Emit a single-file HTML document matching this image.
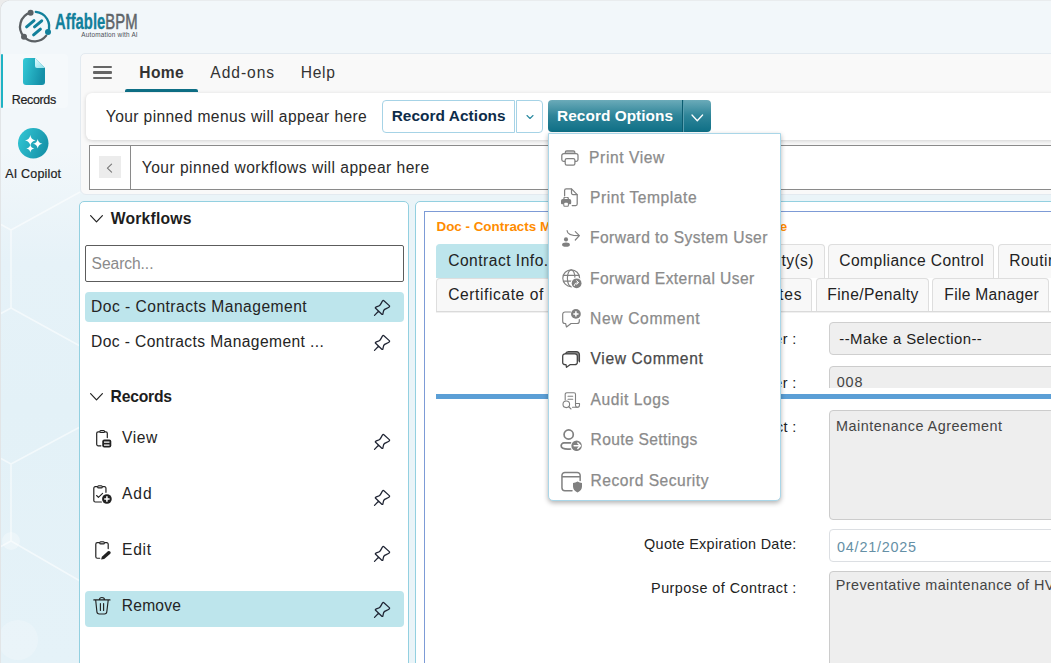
<!DOCTYPE html>
<html lang="en">
<head>
<meta charset="utf-8">
<title>AffableBPM</title>
<style>
*{box-sizing:border-box;margin:0;padding:0}
html,body{width:1051px;height:663px;overflow:hidden}
body{position:relative;font-family:"Liberation Sans",sans-serif;color:#222;background:#f2f7fa;font-size:16px}
.abs{position:absolute}
.t{position:absolute;white-space:nowrap;line-height:1}
#bgl{left:0;top:150px;width:90px;height:513px;background:linear-gradient(180deg,rgba(228,241,247,0) 0%,#e6f2f8 22%,#e3f1f7 50%,#e5f2f8 100%)}
#bgb{left:80px;top:194px;width:971px;height:469px;background:#eaf4f8}
#winedge{left:0;top:0;width:1px;height:663px;background:#e2e5e7}
#wincorner{left:0;top:0;width:9px;height:9px;background:radial-gradient(circle at 100% 100%,rgba(0,0,0,0) 7.600px,#dcdfe1 8.200px,#ececec 9px)}
#wintop{left:0;top:0;width:1051px;height:1px;background:#e9ecee}
#logo{left:17px;top:7px;width:130px;height:40px}
#navact{left:3px;top:54px;width:65px;height:53.500px;background:#f5f9fb;border-radius:0 4px 4px 0}
#navbar{left:1px;top:54px;width:2px;height:53.500px;background:#1fb3c4;border-radius:1px}
#main{left:80px;top:53px;width:980px;height:141.500px;background:#f9f9f9;border:1px solid #e3eaf0;border-radius:5px 0 0 6px}
#hb i{position:absolute;left:0;width:19px;height:2.500px;background:#666;border-radius:1px}
#homeul{left:125px;top:89px;width:73px;height:3px;background:#0e6f86;border-radius:2px 2px 0 0}
#pin1{left:86px;top:92.500px;width:980px;height:47px;background:#fff;border-radius:6px;box-shadow:0 1px 4px rgba(0,0,0,.16)}
#pin2{left:89px;top:145px;width:980px;height:45px;background:#fff;border:1px solid #8a8a8a}
#pin2 .div{position:absolute;left:40px;top:0;width:1px;height:43px;background:#8a8a8a}
#pin2 .bk{position:absolute;left:9px;top:10px;width:22px;height:22px;background:#ececec}
#ra{left:382px;top:100px;width:133px;height:33px;border:1px solid #a6d3e6;border-radius:4px 0 0 4px;background:#fff}
#rad{left:516px;top:100px;width:27px;height:33px;border:1px solid #a6d3e6;border-radius:0 4px 4px 0;background:#fff}
#ro{left:548px;top:100px;width:134px;height:32px;border-radius:4px 0 0 4px;background:linear-gradient(180deg,#6babb9 0%,#2f8599 48%,#0e6f86 100%)}
#rod{left:684px;top:100px;width:27px;height:32px;border-radius:0 4px 4px 0;background:linear-gradient(180deg,#6babb9 0%,#2f8599 48%,#0e6f86 100%)}
#rosep{left:682px;top:100px;width:2px;height:32px;background:linear-gradient(90deg,#0b5c70 0,#0b5c70 50%,#5a9fb0 50%,#5a9fb0 100%)}
#side{left:79px;top:201px;width:330px;height:480px;background:#fff;border:1px solid #93d0e0;border-radius:5px}
#search{left:85px;top:245px;width:319px;height:37px;border:1px solid #5c5c5c;border-radius:2px;background:#fff}
.sel{background:#bde5ec;border-radius:4px}
#cont{left:415px;top:201px;width:700px;height:480px;background:#fff;border:1px solid #93d0e0;border-radius:5px}
#cont2{left:424px;top:211px;width:700px;height:480px;background:#fff;border:1px solid #7d9bd6}
.tab{position:absolute;height:34px;background:#f8f8f8;border:1px solid #dedede;border-bottom:none;border-radius:4px 4px 0 0}
.inp{position:absolute;background:#eee;border:1px solid #ccc;border-radius:4px}
#dd{left:548px;top:133px;width:233px;height:367.500px;background:#fff;border:1px solid #a9d6e8;border-radius:0 0 5px 5px;box-shadow:0 2px 5px rgba(0,0,0,.3)}
svg{position:absolute;overflow:visible}
</style>
</head>
<body>
<div class="abs" id="bgl"></div>
<div class="abs" id="bgb"></div>
<svg style="left:0;top:190px;width:80px;height:473px" viewBox="0 190 80 473"><g fill="none" stroke="#fff" stroke-opacity=".55" stroke-width="1.600"><path d="M0 224 L11 230 L80 192 M11 230 V308 L80 346 M11 308 L0 314"/><path d="M80 427 L11 464 V541 L80 581 M11 541 L0 547 M11 464 L0 458"/></g><circle cx="11" cy="541" r="9" fill="#fff" fill-opacity=".3"/><circle cx="18" cy="640" r="20" fill="#fff" fill-opacity=".2"/></svg>
<div class="abs" id="winedge"></div>
<div class="abs" id="wintop"></div>
<div class="abs" id="wincorner"></div>
<svg id="logo" viewBox="0 0 130 40">
  <g fill="none" stroke-linecap="round">
    <path d="M18.800 4.950 A14.600 14.600 0 0 1 31 25.100" stroke="#12809b" stroke-width="2.300"/>
    <path d="M13.600 5.700 A14.600 14.600 0 0 0 7 29.700" stroke="#5b6064" stroke-width="2.300"/>
    <path d="M7 29.700 A14.600 14.600 0 0 0 29.200 28.600" stroke="#5b6064" stroke-width="2.300"/>
    <path d="M9.600 19.900 L17 13.600 M17.500 19.900 L24.700 13.800 M16.600 27.800 L23.400 22.200" stroke="#12809b" stroke-width="3"/>
  </g>
  <circle cx="13.600" cy="5.700" r="3" fill="#5b6064"/>
  <circle cx="31" cy="25.100" r="3" fill="#12809b"/>
  <circle cx="7" cy="29.700" r="3" fill="#5b6064"/>
</svg>
<div class="t" id="lg1" style="left:54.500px;top:10.68px;font-size:22px;font-weight:bold;color:#12809b;-webkit-text-stroke:0.3px #12809b;transform-origin:0 0;transform:scaleX(0.6749)">Affable<span style="font-weight:normal;color:#5f6569;-webkit-text-stroke:0.55px #5f6569">BPM</span></div>
<div class="t" id="lg2" style="left:81.3px;top:32.30px;font-size:6.4px;color:#4a4f55;letter-spacing:0.200px;">Automation with AI</div>
<div class="abs" id="navact"></div>
<div class="abs" id="navbar"></div>
<svg style="left:23px;top:58px;width:22px;height:27px" viewBox="0 0 22 27">
  <defs><linearGradient id="g1" x1="0" y1="0" x2="1" y2="0.300"><stop offset="0" stop-color="#34cbd8"/><stop offset="1" stop-color="#1590a8"/></linearGradient>
  <linearGradient id="g2" x1="0" y1="0" x2="1" y2="1"><stop offset="0" stop-color="#e4fbff"/><stop offset="1" stop-color="#8fe0ea"/></linearGradient></defs>
  <path d="M3 0 H12 L22 10 V24 a3 3 0 0 1 -3 3 H3 a3 3 0 0 1 -3 -3 V3 a3 3 0 0 1 3 -3z" fill="url(#g1)"/>
  <path d="M12 0 L22 10 H14 a2 2 0 0 1 -2 -2z" fill="url(#g2)"/>
</svg>
<div class="t" id="nv1" style="left:11.8px;top:93.75px;font-size:12.5px;color:#222;letter-spacing:-0.358px;-webkit-text-stroke:0.2px #222;">Records</div>
<svg style="left:18px;top:128px;width:30.500px;height:30.500px" viewBox="0 0 30 30">
  <defs><linearGradient id="g3" x1="0" y1="0" x2="1" y2="0.400"><stop offset="0" stop-color="#33c8d6"/><stop offset="1" stop-color="#1795ab"/></linearGradient></defs>
  <circle cx="15" cy="15" r="15" fill="url(#g3)"/>
  <path d="M12.10 6.98 Q12.78 11.52 17.31 12.20 Q12.78 12.87 12.10 17.41 Q11.42 12.87 6.89 12.20 Q11.42 11.52 12.10 6.98z M19.38 10.82 Q19.98 14.84 24.00 15.44 Q19.98 16.04 19.38 20.07 Q18.78 16.04 14.75 15.44 Q18.78 14.84 19.38 10.82z M12.10 16.13 Q12.61 19.55 16.03 20.07 Q12.61 20.58 12.10 24.00 Q11.59 20.58 8.16 20.07 Q11.59 19.55 12.10 16.13z" fill="#fff"/>
</svg>
<div class="t" id="nv2" style="left:5.3px;top:167.75px;font-size:12.5px;color:#222;letter-spacing:0.167px;-webkit-text-stroke:0.2px #222;">AI Copilot</div>
<div class="abs" id="main"></div>
<div class="abs" id="hb" style="left:93px;top:65.800px;width:19px;height:14px"><i style="top:0"></i><i style="top:5.600px"></i><i style="top:11.100px"></i></div>
<div class="t" id="m1" style="left:139.3px;top:64.70px;font-size:15.6px;font-weight:bold;color:#333;letter-spacing:0.353px;">Home</div>
<div class="t" id="m2" style="left:210.3px;top:64.70px;font-size:15.6px;color:#333;letter-spacing:0.949px;">Add-ons</div>
<div class="t" id="m3" style="left:300.7px;top:64.70px;font-size:15.6px;color:#333;letter-spacing:0.705px;">Help</div>
<div class="abs" id="homeul"></div>
<div class="abs" id="pin1"></div>
<div class="t" id="p1t" style="left:105.8px;top:108.70px;font-size:15.6px;color:#2a2a2a;letter-spacing:0.387px;">Your pinned menus will appear here</div>
<div class="abs" id="pin2"><div class="div"></div><div class="bk"></div>
  <svg style="left:16px;top:16.500px;width:7px;height:10px" viewBox="0 0 7 10"><path d="M5.600 1.200 L1.400 5.200 L5.600 9.200" fill="none" stroke="#777" stroke-width="1.100" stroke-linecap="round" stroke-linejoin="round"/></svg>
</div>
<div class="t" id="p2t" style="left:141.7px;top:159.70px;font-size:15.6px;color:#2a2a2a;letter-spacing:0.476px;">Your pinned workflows will appear here</div>
<div class="abs" id="ra"></div>
<div class="t" id="rat" style="left:391.7px;top:107.80px;font-size:15.4px;font-weight:bold;color:#0d2c4a;letter-spacing:0.059px;">Record Actions</div>
<div class="abs" id="rad"><svg style="left:9px;top:13px;width:8px;height:6px" viewBox="0 0 8 6"><path d="M1 1.500 L4 4.500 L7 1.500" fill="none" stroke="#2a8aa0" stroke-width="1.100" stroke-linecap="round" stroke-linejoin="round"/></svg></div>
<div class="abs" id="ro"></div><div class="abs" id="rosep"></div><div class="abs" id="rod"><svg style="left:6.500px;top:13.500px;width:13px;height:9px" viewBox="0 0 13 9"><path d="M1 1 L6.300 6.700 L11.600 1" fill="none" stroke="#fff" stroke-width="1.300" stroke-linecap="round" stroke-linejoin="round"/></svg></div>
<div class="t" id="rot" style="left:557.1px;top:107.80px;font-size:15.4px;font-weight:bold;color:#fff;letter-spacing:0.038px;">Record Options</div>
<div class="abs" id="side"></div>
<div class="abs" id="cont"></div>
<div class="abs" id="cont2"></div>
<svg style="left:90px;top:214.5px;width:13px;height:8px" viewBox="0 0 13 8"><path d="M0.600 0.700 L6.500 6.800 L12.400 0.700" fill="none" stroke="#222" stroke-width="1.200" stroke-linecap="round" stroke-linejoin="round"/></svg>
<div class="t" id="h1" style="left:110.8px;top:210.65px;font-size:15.7px;font-weight:bold;color:#1d1d1d;letter-spacing:0.201px;">Workflows</div>
<div class="abs" id="search"></div>
<div class="t" id="srch" style="left:91.6px;top:255.70px;font-size:15.6px;color:#8a8a8a;letter-spacing:-0.066px;">Search...</div>
<div class="abs sel" style="left:85px;top:292px;width:319px;height:30px"></div>
<div class="t" id="w1" style="left:91.1px;top:298.70px;font-size:15.6px;color:#242424;letter-spacing:0.474px;">Doc - Contracts Management</div>
<svg style="left:374px;top:300px;width:16px;height:16px" viewBox="0 0 16 16"><path d="M8.600 0.900 Q9.200 0.100 9.900 0.700 L15.300 5.600 Q16 6.300 15.200 6.900 C13.800 8 12 8.600 10.600 9.400 C9.200 10.300 9.300 12.300 8.900 13.900 Q8.500 14.900 7.800 14.200 L1.600 8.300 Q0.900 7.500 1.900 7.100 C3.400 6.500 5 6.100 5.900 5.200 C7 4.200 7.500 2.400 8.600 0.900 Z M4.500 11.300 L0.500 15.400" fill="none" stroke="#1f2433" stroke-width="1.250" stroke-linejoin="round" stroke-linecap="round"/></svg>
<div class="t" id="w2" style="left:91.1px;top:333.70px;font-size:15.6px;color:#242424;letter-spacing:0.404px;">Doc - Contracts Management ...</div>
<svg style="left:374px;top:335px;width:16px;height:16px" viewBox="0 0 16 16"><path d="M8.600 0.900 Q9.200 0.100 9.900 0.700 L15.300 5.600 Q16 6.300 15.200 6.900 C13.800 8 12 8.600 10.600 9.400 C9.200 10.300 9.300 12.300 8.900 13.900 Q8.500 14.900 7.800 14.200 L1.600 8.300 Q0.900 7.500 1.900 7.100 C3.400 6.500 5 6.100 5.900 5.200 C7 4.200 7.500 2.400 8.600 0.900 Z M4.500 11.300 L0.500 15.400" fill="none" stroke="#1f2433" stroke-width="1.250" stroke-linejoin="round" stroke-linecap="round"/></svg>
<svg style="left:90px;top:392.5px;width:13px;height:8px" viewBox="0 0 13 8"><path d="M0.600 0.700 L6.500 6.800 L12.400 0.700" fill="none" stroke="#222" stroke-width="1.200" stroke-linecap="round" stroke-linejoin="round"/></svg>
<div class="t" id="h2" style="left:110.5px;top:388.65px;font-size:15.7px;font-weight:bold;color:#1d1d1d;letter-spacing:-0.204px;">Records</div>
<svg style="left:94px;top:429px;width:19px;height:20px" viewBox="0 0 19 20">
  <path d="M5.500 2.800 H4.200 a1.500 1.500 0 0 0 -1.500 1.500 V15.300 a1.500 1.500 0 0 0 1.500 1.500 H6.900 M11 2.800 H11.800 a1.500 1.500 0 0 1 1.500 1.500 V8.600" fill="none" stroke="#222" stroke-width="1.200" stroke-linecap="round"/>
  <rect x="5.800" y="1.500" width="4.800" height="1.900" rx="0.950" fill="#fff" stroke="#222" stroke-width="1.100"/>
  <rect x="8.250" y="10.400" width="9.050" height="8.100" rx="2" fill="#222"/>
  <path d="M10 13.100 H15.500 M10 16.200 H15.500" stroke="#fff" stroke-width="1.300"/>
</svg>
<div class="t" id="r1" style="left:122.1px;top:429.70px;font-size:15.6px;color:#242424;letter-spacing:0.556px;">View</div>
<svg style="left:374px;top:434px;width:16px;height:16px" viewBox="0 0 16 16"><path d="M8.600 0.900 Q9.200 0.100 9.900 0.700 L15.300 5.600 Q16 6.300 15.200 6.900 C13.800 8 12 8.600 10.600 9.400 C9.200 10.300 9.300 12.300 8.900 13.900 Q8.500 14.900 7.800 14.200 L1.600 8.300 Q0.900 7.500 1.900 7.100 C3.400 6.500 5 6.100 5.900 5.200 C7 4.200 7.500 2.400 8.600 0.900 Z M4.500 11.300 L0.500 15.400" fill="none" stroke="#1f2433" stroke-width="1.250" stroke-linejoin="round" stroke-linecap="round"/></svg>
<svg style="left:92px;top:484px;width:21px;height:20px" viewBox="0 0 21 20">
  <path d="M5.500 2.700 H3.300 a1.500 1.500 0 0 0 -1.500 1.500 V16.500 a1.500 1.500 0 0 0 1.500 1.500 H9.400 M10.500 2.700 H12.450 a1.500 1.500 0 0 1 1.500 1.500 V8.300" fill="none" stroke="#222" stroke-width="1.200" stroke-linecap="round"/>
  <rect x="5.650" y="1.700" width="4.650" height="2.200" rx="1" fill="#ddd" stroke="#222" stroke-width="1.100"/>
  <path d="M4.600 11.500 L6.400 13.300 L10.600 9.400" fill="none" stroke="#222" stroke-width="1.100" stroke-linecap="round" stroke-linejoin="round"/>
  <circle cx="14.900" cy="15" r="4.850" fill="#222"/>
  <path d="M14.900 12.300 V17.700 M12.200 15 H17.600" stroke="#fff" stroke-width="1.500"/>
</svg>
<div class="t" id="r2" style="left:122.1px;top:485.70px;font-size:15.6px;color:#242424;letter-spacing:0.871px;">Add</div>
<svg style="left:374px;top:490px;width:16px;height:16px" viewBox="0 0 16 16"><path d="M8.600 0.900 Q9.200 0.100 9.900 0.700 L15.300 5.600 Q16 6.300 15.200 6.900 C13.800 8 12 8.600 10.600 9.400 C9.200 10.300 9.300 12.300 8.900 13.900 Q8.500 14.900 7.800 14.200 L1.600 8.300 Q0.900 7.500 1.900 7.100 C3.400 6.500 5 6.100 5.900 5.200 C7 4.200 7.500 2.400 8.600 0.900 Z M4.500 11.300 L0.500 15.400" fill="none" stroke="#1f2433" stroke-width="1.250" stroke-linejoin="round" stroke-linecap="round"/></svg>
<svg style="left:94px;top:541px;width:19px;height:20px" viewBox="0 0 19 20">
  <path d="M5.500 1.700 H3.300 a1.500 1.500 0 0 0 -1.500 1.500 V15.750 a1.500 1.500 0 0 0 1.500 1.500 H5.700 M10.700 1.700 H12.700 a1.500 1.500 0 0 1 1.500 1.500 V7.600" fill="none" stroke="#222" stroke-width="1.200" stroke-linecap="round"/>
  <rect x="5.700" y="0.800" width="4.700" height="2.100" rx="1" fill="#ddd" stroke="#222" stroke-width="1.100"/>
  <path d="M7.100 18.600 L7.900 15.800 L13.900 10.300 a1.750 1.750 0 0 1 2.400 2.500 L10.200 18.100 Z" fill="#222"/>
</svg>
<div class="t" id="r3" style="left:122.1px;top:541.70px;font-size:15.6px;color:#242424;letter-spacing:0.673px;">Edit</div>
<svg style="left:374px;top:546px;width:16px;height:16px" viewBox="0 0 16 16"><path d="M8.600 0.900 Q9.200 0.100 9.900 0.700 L15.300 5.600 Q16 6.300 15.200 6.900 C13.800 8 12 8.600 10.600 9.400 C9.200 10.300 9.300 12.300 8.900 13.900 Q8.500 14.900 7.800 14.200 L1.600 8.300 Q0.900 7.500 1.900 7.100 C3.400 6.500 5 6.100 5.900 5.200 C7 4.200 7.500 2.400 8.600 0.900 Z M4.500 11.300 L0.500 15.400" fill="none" stroke="#1f2433" stroke-width="1.250" stroke-linejoin="round" stroke-linecap="round"/></svg>
<div class="abs sel" style="left:85px;top:591px;width:319px;height:36px"></div>
<svg style="left:93px;top:597px;width:18px;height:19px" viewBox="0 0 18 19">
  <path d="M0.800 2.900 H17 M6.300 2.800 a2.600 2.300 0 0 1 5.200 0 M2.700 3.200 L3.900 14.800 a2.400 2.400 0 0 0 2.400 2.200 H11.400 a2.400 2.400 0 0 0 2.400 -2.200 L15.200 3.200 M7.400 6.500 V13.500 M10.600 6.500 V13.500" fill="none" stroke="#222" stroke-width="1.150" stroke-linecap="round" stroke-linejoin="round"/>
</svg>
<div class="t" id="r4" style="left:121.8px;top:597.70px;font-size:15.6px;color:#242424;letter-spacing:0.202px;">Remove</div>
<svg style="left:374px;top:602px;width:16px;height:16px" viewBox="0 0 16 16"><path d="M8.600 0.900 Q9.200 0.100 9.900 0.700 L15.300 5.600 Q16 6.300 15.200 6.900 C13.800 8 12 8.600 10.600 9.400 C9.200 10.300 9.300 12.300 8.900 13.900 Q8.500 14.900 7.800 14.200 L1.600 8.300 Q0.900 7.500 1.900 7.100 C3.400 6.500 5 6.100 5.900 5.200 C7 4.200 7.500 2.400 8.600 0.900 Z M4.500 11.300 L0.500 15.400" fill="none" stroke="#1f2433" stroke-width="1.250" stroke-linejoin="round" stroke-linecap="round"/></svg>
<div class="t" id="ttl" style="left:436.5px;top:219.80px;font-size:13.4px;font-weight:bold;color:#ff8c00;">Doc - Contracts Management</div>
<div class="t" id="ttl2" style="right:263.70000000000005px;top:219.80px;font-size:13.4px;font-weight:bold;color:#ff8c00;">- Record Remove Mode</div>
<div class="tab" style="left:436px;top:244px;width:123px;background:#bde5ec;border-color:#bde5ec;"></div>
<div class="t" id="t1" style="left:448.2px;top:252.70px;font-size:15.6px;color:#222;letter-spacing:0.489px;">Contract Info.</div>
<div class="tab" style="left:562.3px;top:244px;width:125px;"></div>
<div class="t" id="t2" style="left:574.0px;top:252.70px;font-size:15.6px;color:#222;letter-spacing:0.411px;">Financial Info.</div>
<div class="tab" style="left:690.6px;top:244px;width:134.2px;"></div>
<div class="t" id="t3" style="left:688.92px;top:252.70px;font-size:15.6px;color:#222;letter-spacing:0.418px;">Contract Party(s)</div>
<div class="tab" style="left:828.3px;top:244px;width:165.7px;"></div>
<div class="t" id="t4" style="left:839.3px;top:252.70px;font-size:15.6px;color:#222;letter-spacing:0.436px;">Compliance Control</div>
<div class="tab" style="left:998px;top:244px;width:120px;"></div>
<div class="t" id="t5" style="left:1009.3px;top:252.70px;font-size:15.6px;color:#222;letter-spacing:0.447px;">Routing Info.</div>
<div class="tab" style="left:436px;top:277.5px;width:194px;"></div>
<div class="t" id="t6" style="left:448.2px;top:286.70px;font-size:15.6px;color:#222;letter-spacing:0.587px;">Certificate of</div>
<div class="t" id="t6b" style="left:550.3px;top:286.70px;font-size:15.6px;color:#222;letter-spacing:0.559px;">Insurance</div>
<div class="tab" style="left:633.3px;top:277.5px;width:100px;"></div>
<div class="t" id="t7" style="left:645.0px;top:286.70px;font-size:15.6px;color:#222;letter-spacing:0.639px;">Renewals</div>
<div class="tab" style="left:736.6px;top:277.5px;width:75.6px;"></div>
<div class="t" id="t8" style="left:757.52px;top:286.70px;font-size:15.6px;color:#222;letter-spacing:0.807px;">Notes</div>
<div class="tab" style="left:815.5px;top:277.5px;width:113.5px;"></div>
<div class="t" id="t9" style="left:827.3px;top:286.70px;font-size:15.6px;color:#222;letter-spacing:0.390px;">Fine/Penalty</div>
<div class="tab" style="left:932.3px;top:277.5px;width:117.1px;"></div>
<div class="t" id="t10" style="left:944.3px;top:286.70px;font-size:15.6px;color:#222;letter-spacing:0.305px;">File Manager</div>
<div class="abs" style="left:436px;top:311px;width:640px;height:1px;background:#dadada"></div><div class="abs" style="left:436px;top:312px;width:640px;height:1px;background:#f0f0f0"></div>
<div class="t" id="l1" style="right:254.29999999999995px;top:331.80px;font-size:14.4px;color:#222;letter-spacing:0.396px;">Contract Owner :</div>
<div class="inp" style="left:829px;top:322px;width:300px;height:32.500px;background:#efefef;border-color:#cfcfcf"></div>
<div class="t" id="v1" style="left:839.3px;top:331.55px;font-size:14.9px;color:#1d1d1d;letter-spacing:0.445px;">--Make a Selection--</div>
<div class="t" id="l2" style="right:254.30999999999995px;top:375.80px;font-size:14.4px;color:#222;letter-spacing:0.394px;">Contract Number :</div>
<div class="inp" style="left:829px;top:366px;width:300px;height:33px"></div>
<div class="t" id="v2" style="left:836.8px;top:374.80px;font-size:14.4px;color:#444;letter-spacing:0.787px;">008</div>
<div class="abs" style="left:436px;top:388px;width:640px;height:6px;background:#fff"></div>
<div class="abs" style="left:436px;top:393.500px;width:640px;height:5.500px;background:#5b9fd6"></div>
<div class="abs" style="left:436px;top:399px;width:640px;height:8px;background:#fff"></div>
<div class="t" id="l3" style="right:254.34000000000003px;top:419.80px;font-size:14.4px;color:#222;letter-spacing:0.363px;">Contract Subject :</div>
<div class="inp" style="left:829px;top:410px;width:300px;height:110px"></div>
<div class="t" id="v3" style="left:836.1px;top:418.80px;font-size:14.4px;color:#444;letter-spacing:0.490px;">Maintenance Agreement</div>
<div class="t" id="l4" style="right:254.38px;top:536.80px;font-size:14.4px;color:#222;letter-spacing:0.315px;">Quote Expiration Date:</div>
<div class="inp" style="left:829px;top:529px;width:300px;height:32.500px;background:#fff;border-color:#dcdfe3"></div>
<div class="t" id="v4" style="left:837.1px;top:539.80px;font-size:14.4px;color:#6590a6;letter-spacing:0.759px;">04/21/2025</div>
<div class="t" id="l5" style="right:254.24px;top:580.80px;font-size:14.4px;color:#222;letter-spacing:0.462px;">Purpose of Contract :</div>
<div class="inp" style="left:829px;top:571px;width:300px;height:120px"></div>
<div class="t" id="v5" style="left:835.8px;top:577.80px;font-size:14.4px;color:#444;letter-spacing:0.420px;">Preventative maintenance of HVAC systems</div>
<div class="abs" id="dd"></div>
<svg style="left:561px;top:150px;width:18px;height:16px" viewBox="0 0 18 16"><rect x="4.600" y="0.900" width="8.900" height="2.600" fill="#c4c4c4"/><g fill="none" stroke="#808080" stroke-width="1.250" stroke-linejoin="round"><path d="M4.300 3.400 V2.300 a1.500 1.500 0 0 1 1.500 -1.500 H12.300 a1.500 1.500 0 0 1 1.500 1.500 V3.400"/><path d="M4.200 11.300 H2.600 a1.800 1.800 0 0 1 -1.800 -1.800 V5.600 a2 2 0 0 1 2 -2 H15 a2 2 0 0 1 2 2 V9.500 a1.800 1.800 0 0 1 -1.800 1.800 H13.900"/><rect x="4.200" y="8.600" width="9.700" height="6.500" rx="1.600" fill="#fff"/></g></svg>
<div class="t" id="d0" style="left:589.1px;top:149.70px;font-size:15.6px;color:#8b8b8b;letter-spacing:0.595px;-webkit-text-stroke:0.25px #8b8b8b;">Print View</div>
<svg style="left:561px;top:188px;width:18px;height:19px" viewBox="0 0 18 19"><g fill="none" stroke="#808080" stroke-width="1.250" stroke-linejoin="round" stroke-linecap="round"><path d="M3.600 7.800 V2.400 a1.500 1.500 0 0 1 1.500 -1.500 H10.500 L16.200 6.600 V16 a1.500 1.500 0 0 1 -1.500 1.500 H11.200"/><path d="M10.500 1 V5.100 a1.500 1.500 0 0 0 1.500 1.500 H16.100"/></g><path d="M2.300 11 V10.200 a1.200 1.200 0 0 1 1.200 -1.200 H6.700 a1.200 1.200 0 0 1 1.200 1.200 V11 H8.500 a1.700 1.700 0 0 1 1.700 1.700 V15.200 a1 1 0 0 1 -1 1 H7.900 V17.600 a1.200 1.200 0 0 1 -1.200 1.200 H3.500 a1.200 1.200 0 0 1 -1.200 -1.200 V16.200 H1 a1 1 0 0 1 -1 -1 V12.700 a1.700 1.700 0 0 1 1.700 -1.700 Z" fill="#808080"/><ellipse cx="5.100" cy="10.400" rx="1.700" ry="0.650" fill="#fff"/><rect x="3.300" y="14.700" width="3.600" height="3.100" rx=".9" fill="#fff"/></svg>
<div class="t" id="d1" style="left:590.0px;top:189.70px;font-size:15.6px;color:#8b8b8b;letter-spacing:0.559px;-webkit-text-stroke:0.25px #8b8b8b;">Print Template</div>
<svg style="left:562px;top:229.500px;width:18px;height:18px" viewBox="0 0 18 18"><circle cx="4" cy="9.400" r="2.050" fill="#808080"/><ellipse cx="4" cy="14.700" rx="3.900" ry="2.150" fill="#808080"/><path d="M5.100 0.700 Q5.400 5.700 17 5.700 M13.300 1.600 L17.400 5.700 L13.300 10" fill="none" stroke="#808080" stroke-width="1.200" stroke-linecap="round" stroke-linejoin="round"/></svg>
<div class="t" id="d2" style="left:590.0px;top:229.70px;font-size:15.6px;color:#8b8b8b;letter-spacing:0.444px;-webkit-text-stroke:0.25px #8b8b8b;">Forward to System User</div>
<svg style="left:561.500px;top:268.500px;width:21px;height:21px" viewBox="0 0 21 21"><g fill="none" stroke="#808080" stroke-width="1.150"><circle cx="9.200" cy="9.200" r="8.400"/><ellipse cx="9.200" cy="9.200" rx="3.800" ry="8.400"/><path d="M1.300 6.300 H17.100 M1.300 12.100 H17.100"/></g><circle cx="14.600" cy="14.300" r="6" fill="#fff"/><circle cx="14.600" cy="14.300" r="4.900" fill="#808080"/><path d="M12.100 16.600 Q12.400 13.600 16.100 13.600 M14.700 11.800 L16.600 13.600 L14.700 15.400" fill="none" stroke="#fff" stroke-width="1" stroke-linecap="round" stroke-linejoin="round"/></svg>
<div class="t" id="d3" style="left:590.0px;top:270.70px;font-size:15.6px;color:#8b8b8b;letter-spacing:0.413px;-webkit-text-stroke:0.25px #8b8b8b;">Forward External User</div>
<svg style="left:562px;top:308.500px;width:19px;height:19px" viewBox="0 0 19 19"><path d="M8.500 3 H3 a2.300 2.300 0 0 0 -2.300 2.300 V12.200 a2.300 2.300 0 0 0 2.300 2.300 H3.600 L4.500 18 L9 14.500 H15 a2.300 2.300 0 0 0 2.300 -2.300 V10.500" fill="none" stroke="#808080" stroke-width="1.150" stroke-linejoin="round" stroke-linecap="round"/><circle cx="13.900" cy="4.900" r="4.900" fill="#808080"/><path d="M13.900 2.300 V7.500 M11.300 4.900 H16.500" stroke="#fff" stroke-width="1.500"/></svg>
<div class="t" id="d4" style="left:590.0px;top:310.70px;font-size:15.6px;color:#8b8b8b;letter-spacing:0.654px;-webkit-text-stroke:0.25px #8b8b8b;">New Comment</div>
<svg style="left:562px;top:351px;width:18px;height:17px" viewBox="0 0 18 17"><path d="M3.300 3 Q4.200 0.650 6.500 0.650 H14.400 a3 3 0 0 1 3 3 V10.800" fill="#8e8e8e" stroke="#444" stroke-width="1.300" stroke-linecap="round"/><path d="M3 2.900 H13 a2.300 2.300 0 0 1 2.300 2.300 V11.400 a2.300 2.300 0 0 1 -2.300 2.300 H8 L4.500 16.300 L4 13.700 H3 a2.300 2.300 0 0 1 -2.300 -2.300 V5.200 a2.300 2.300 0 0 1 2.300 -2.300 Z" fill="#fff" stroke="#444" stroke-width="1.300" stroke-linejoin="round"/></svg>
<div class="t" id="d5" style="left:590.6px;top:350.70px;font-size:15.6px;color:#4a4a4a;letter-spacing:0.611px;-webkit-text-stroke:0.25px #4a4a4a;">View Comment</div>
<svg style="left:561.500px;top:391.500px;width:19px;height:18px" viewBox="0 0 19 18"><g fill="none" stroke="#808080" stroke-width="1.100" stroke-linecap="round" stroke-linejoin="round"><path d="M3.200 8 V2.300 a1.500 1.500 0 0 1 1.500 -1.500 H12 a1.500 1.500 0 0 1 1.500 1.500 V11.500 H17.500 V13 a2.300 2.300 0 0 1 -2.300 2.300 H10.500"/><path d="M13.500 11.500 V13.200 a2 2 0 0 0 1.800 2.100"/><path d="M6 4.300 H10.700 M6 7.300 H10.700"/><circle cx="4.300" cy="12.300" r="3.300"/><path d="M6.700 14.700 L9 17"/></g></svg>
<div class="t" id="d6" style="left:590.6px;top:391.70px;font-size:15.6px;color:#8b8b8b;letter-spacing:0.553px;-webkit-text-stroke:0.25px #8b8b8b;">Audit Logs</div>
<svg style="left:560px;top:429px;width:21.800px;height:21.800px;overflow:hidden" viewBox="0 0 21.800 21.800"><g fill="none" stroke="#808080" stroke-width="1.700" stroke-linecap="round"><circle cx="8.670" cy="5.500" r="4.600"/><path d="M10.700 13.900 H4 a2.850 2.850 0 0 0 -2.850 2.850 Q1.150 20.200 8 20.200 Q9.500 20.200 10.700 20"/></g><circle cx="16.600" cy="16.800" r="6.100" fill="#fff"/><circle cx="16.600" cy="16.800" r="5.250" fill="#808080"/><path d="M14.100 16.800 H20 M17.800 14.100 L20.500 16.800 L17.800 19.500" fill="none" stroke="#fff" stroke-width="1.400" stroke-linecap="round" stroke-linejoin="round"/></svg>
<div class="t" id="d7" style="left:590.6px;top:431.70px;font-size:15.6px;color:#8b8b8b;letter-spacing:0.344px;-webkit-text-stroke:0.25px #8b8b8b;">Route Settings</div>
<svg style="left:561px;top:471.500px;width:21px;height:21px" viewBox="0 0 21 21"><path d="M11 18.650 H3.900 a2.950 2.950 0 0 1 -2.950 -2.950 V3.400 a2.950 2.950 0 0 1 2.950 -2.950 H16.200 a2.950 2.950 0 0 1 2.950 2.950 V8.600 M0.950 4.700 H19.150" fill="none" stroke="#808080" stroke-width="1.500" stroke-linecap="round"/><path d="M16.500 9.400 Q18.600 10.800 21 10.900 V14.600 Q21 18.600 16.500 20.500 Q12 18.600 12 14.600 V10.900 Q14.400 10.800 16.500 9.400 Z" fill="#808080" stroke="#fff" stroke-width="1" paint-order="stroke"/></svg>
<div class="t" id="d8" style="left:590.6px;top:472.70px;font-size:15.6px;color:#8b8b8b;letter-spacing:0.495px;-webkit-text-stroke:0.25px #8b8b8b;">Record Security</div>
</body>
</html>
